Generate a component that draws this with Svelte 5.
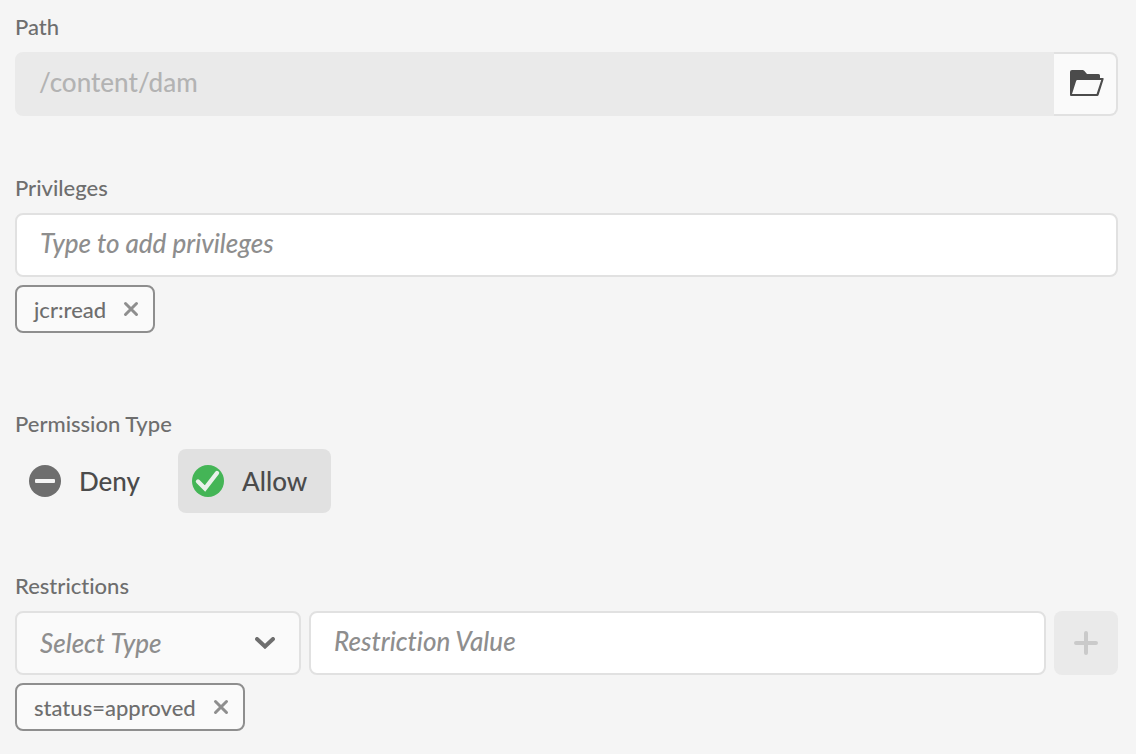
<script>
  let path = $state('/content/dam');
  let privilege = $state('');
  let permission = $state('allow');
  let restrictionType = $state('');
  let restrictionValue = $state('');
  let privileges = $state(['jcr:read']);
  let restrictions = $state(['status=approved']);
</script>

{#snippet tag(text, remove)}
  <li class="tag">
    <span>{text}</span>
    <button type="button" class="remove" aria-label="Remove {text}" onclick={remove}>
      <svg viewBox="0 0 16 16" width="16" height="16" aria-hidden="true">
        <path d="M2.500 2.500L13.500 13.500M13.500 2.500L2.500 13.500" fill="none" stroke="currentColor" stroke-width="3" stroke-linecap="round" />
      </svg>
    </button>
  </li>
{/snippet}

<form class="editor" onsubmit={(e) => e.preventDefault()}>
  <div class="group">
    <label class="label" for="path">Path</label>
    <div class="joined">
      <input id="path" class="field" type="text" bind:value={path} disabled />
      <button type="button" class="browse" aria-label="Browse">
        <svg viewBox="0 0 34 26" width="34" height="26" aria-hidden="true">
          <path fill="#4b4b4b" fill-rule="evenodd" d="M2 0H12.500Q13.500 0 14.200 .8L17 4H28.500Q30 4 30 5.500V8H32.800Q34 8 33.600 9.300L28.600 25Q28.300 26 27.200 26H1Q0 26 0 25V2Q0 0 2 0ZM7.300 10Q6.500 10 6.200 10.800L2 24H26.600L31.200 10Z" />
        </svg>
      </button>
    </div>
  </div>

  <div class="group tagged">
    <label class="label" for="privileges">Privileges</label>
    <input id="privileges" class="field" type="text" placeholder="Type to add privileges" bind:value={privilege} />
    <ul class="tags">
      {#each privileges as item}
        {@render tag(item, () => (privileges = privileges.filter((p) => p !== item)))}
      {/each}
    </ul>
  </div>

  <div class="group" role="group" aria-labelledby="permission-label">
    <span class="label" id="permission-label">Permission Type</span>
    <div class="choices">
      <button type="button" class="choice" class:selected={permission === 'deny'} aria-pressed={permission === 'deny'} onclick={() => (permission = 'deny')}>
        <svg viewBox="0 0 32 32" width="32" height="32" aria-hidden="true">
          <circle cx="16" cy="16" r="16" fill="#6e6e6e" />
          <rect x="6" y="14" width="20" height="4" rx="1" fill="#f5f5f5" />
        </svg>
        Deny
      </button>
      <button type="button" class="choice" class:selected={permission === 'allow'} aria-pressed={permission === 'allow'} onclick={() => (permission = 'allow')}>
        <svg viewBox="0 0 32 32" width="32" height="32" aria-hidden="true">
          <circle cx="16" cy="16" r="16" fill="#44b556" />
          <path d="M6 16.500L13 23.500L25 8" fill="none" stroke="#e9f1ea" stroke-width="4.400" stroke-linecap="round" stroke-linejoin="miter" />
        </svg>
        Allow
      </button>
    </div>
  </div>

  <div class="group" role="group" aria-labelledby="restrictions-label">
    <span class="label" id="restrictions-label">Restrictions</span>
    <div class="row">
      <div class="picker">
        <select class="field" class:empty={!restrictionType} aria-label="Restriction type" bind:value={restrictionType}>
          <option value="" disabled hidden>Select Type</option>
          <option value="status">status</option>
        </select>
        <svg class="chevron" viewBox="0 0 20 12" width="20" height="12" aria-hidden="true">
          <path d="M2 2L10 9.500L18 2" fill="none" stroke="#6e6e6e" stroke-width="4" stroke-linecap="round" />
        </svg>
      </div>
      <input class="field value" type="text" aria-label="Restriction value" placeholder="Restriction Value" bind:value={restrictionValue} />
      <button type="button" class="add" aria-label="Add restriction" disabled>
        <svg viewBox="0 0 24 24" width="24" height="24" aria-hidden="true">
          <path d="M12 2V22M2 12H22" fill="none" stroke="#cacaca" stroke-width="4" stroke-linecap="round" />
        </svg>
      </button>
    </div>
    <ul class="tags">
      {#each restrictions as item}
        {@render tag(item, () => (restrictions = restrictions.filter((r) => r !== item)))}
      {/each}
    </ul>
  </div>
</form>

<style>
  :global(body) {
    background: #f5f5f5;
  }

  .editor {
    padding: 4px 18px 20px 15px;
    color: #6e6e6e;
    font-family: Lato, "Open Sans", sans-serif;
    font-size: 22px;
    font-weight: 500;
    font-variant-ligatures: none;
  }

  .editor * {
    box-sizing: border-box;
  }

  .group {
    display: flex;
    flex-direction: column;
    margin-bottom: 50px;
  }

  .group:first-child {
    margin-bottom: 49px;
  }

  .group.tagged {
    margin-bottom: 68px;
  }

  .group:last-child {
    margin-bottom: 0;
  }

  .label {
    display: block;
    padding-bottom: 2px;
    line-height: 46px;
  }

  button,
  input,
  select {
    margin: 0;
    font: inherit;
    font-variant-ligatures: inherit;
  }

  .field {
    width: 100%;
    height: 64px;
    padding: 0 23px 4px;
    border: 2px solid #e1e1e1;
    border-radius: 8px;
    background: #fff;
    color: #4b4b4b;
    font-size: 26px;
  }

  .field::placeholder {
    color: #8e8e8e;
    font-style: italic;
    opacity: 1;
  }

  .field:disabled {
    border-color: #eaeaea;
    background: #eaeaea;
    color: #b3b3b3;
  }

  .joined,
  .row,
  .choices,
  .tags {
    display: flex;
  }

  .joined .field {
    flex: 1;
    min-width: 0;
    padding-left: 22px;
    border-radius: 8px 0 0 8px;
  }

  .browse,
  .add {
    display: flex;
    flex: none;
    align-items: center;
    justify-content: center;
    width: 64px;
    height: 64px;
    padding: 0;
  }

  .browse {
    padding: 0 0 2px 4px;
    border: 2px solid #e1e1e1;
    border-left: 0;
    border-radius: 0 8px 8px 0;
    background: #fafafa;
  }

  .add {
    border: 0;
    border-radius: 8px;
    background: #eaeaea;
  }

  .row {
    gap: 8px;
  }

  .picker {
    position: relative;
    flex: none;
    width: 286px;
  }

  .picker .field {
    padding-bottom: 0;
    appearance: none;
    background: #fafafa;
  }

  .picker .empty {
    color: #8e8e8e;
    font-style: italic;
  }

  .chevron {
    position: absolute;
    top: 26px;
    right: 26px;
    pointer-events: none;
  }

  .value {
    flex: 1;
    min-width: 0;
  }

  .choices {
    gap: 14px;
  }

  .choice {
    display: flex;
    align-items: center;
    gap: 18px;
    height: 64px;
    padding: 0 24px 0 14px;
    border: 0;
    border-radius: 8px;
    background: transparent;
    color: #4b4b4b;
    font-size: 26px;
  }

  .choice.selected {
    background: #e1e1e1;
  }

  .tags {
    flex-wrap: wrap;
    gap: 8px;
    margin: 8px 0 0;
    padding: 0;
    list-style: none;
  }

  .tag {
    display: flex;
    align-items: center;
    gap: 17px;
    height: 48px;
    padding: 0 14px 0 17px;
    border: 2px solid #8e8e8e;
    border-radius: 8px;
    background: #fafafa;
  }

  .remove {
    display: flex;
    padding: 0;
    border: 0;
    background: none;
    color: #8e8e8e;
  }
</style>
